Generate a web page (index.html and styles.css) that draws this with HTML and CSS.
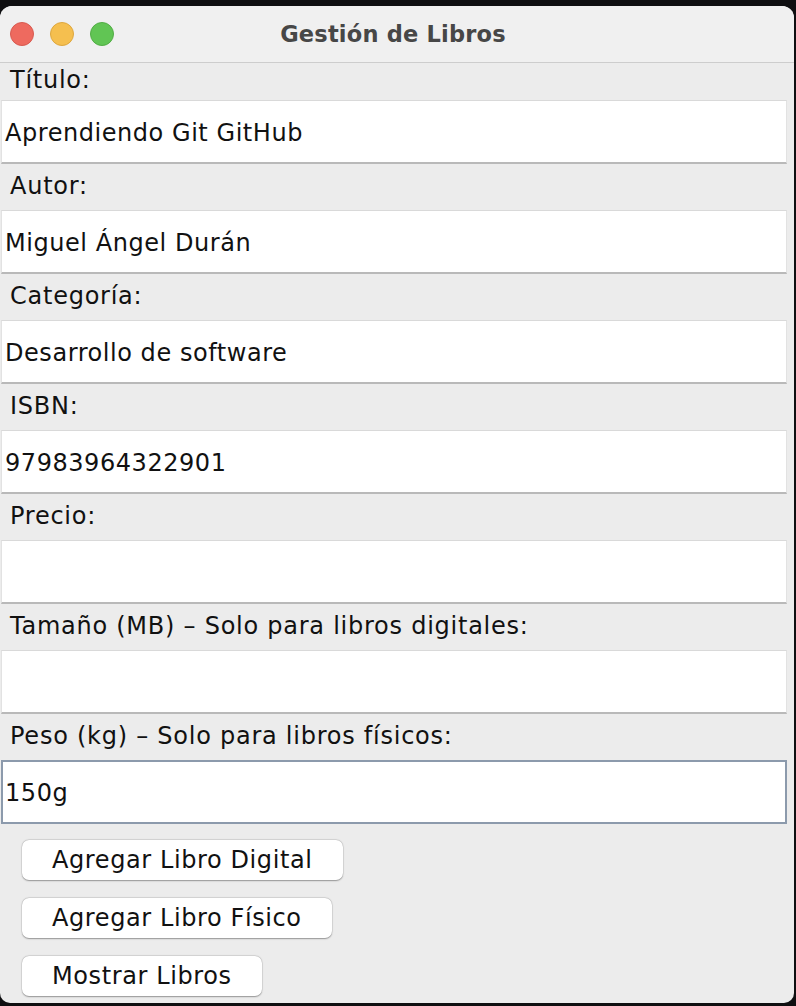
FILE: index.html
```html
<!DOCTYPE html>
<html lang="es">
<head>
<meta charset="utf-8">
<title>Gestión de Libros</title>
<link rel="stylesheet" href="styles.css">
</head>
<body>
<div class="window">
  <div class="titlebar">
    <div class="lights">
      <span class="light red"></span>
      <span class="light yellow"></span>
      <span class="light green"></span>
    </div>
    <div class="title">Gestión de Libros</div>
    <div class="spacer"></div>
  </div>
  <div class="content">
    <div class="label first">Título:</div>
    <div class="field">Aprendiendo Git GitHub</div>
    <div class="label">Autor:</div>
    <div class="field">Miguel Ángel Durán</div>
    <div class="label">Categoría:</div>
    <div class="field">Desarrollo de software</div>
    <div class="label">ISBN:</div>
    <div class="field">97983964322901</div>
    <div class="label">Precio:</div>
    <div class="field"></div>
    <div class="label">Tamaño (MB) – Solo para libros digitales:</div>
    <div class="field"></div>
    <div class="label">Peso (kg) – Solo para libros físicos:</div>
    <div class="field focused">150g</div>
    <div class="buttons">
      <button class="btn">Agregar Libro Digital</button>
      <button class="btn">Agregar Libro Físico</button>
      <button class="btn">Mostrar Libros</button>
    </div>
  </div>
</div>
</body>
</html>
```
FILE: styles.css
```css
html, body {
  margin: 0;
  padding: 0;
  background: #0f0f11;
}
body {
  width: 796px;
  height: 1006px;
  overflow: hidden;
  font-family: "DejaVu Sans", "Liberation Sans", sans-serif;
}
.window {
  margin-top: 6px;
  width: 794px;
  height: 997px;
  background: #ececec;
  border-radius: 12px 12px 10px 10px;
  overflow: hidden;
}
.titlebar {
  height: 56px;
  background: #f0f0f0;
  border-bottom: 1px solid #cdcdcd;
  display: grid;
  grid-template-columns: 1fr auto 1fr;
  align-items: center;
}
.lights {
  display: flex;
  gap: 16px;
  padding-left: 10px;
}
.light {
  width: 24px;
  height: 24px;
  border-radius: 50%;
  box-sizing: border-box;
}
.red { background: #ee6a5f; border: 1px solid #d85a50; }
.yellow { background: #f5bf4f; border: 1px solid #dea73e; }
.green { background: #61c554; border: 1px solid #52ad45; }
.title {
  font-family: "DejaVu Sans", "Liberation Sans", sans-serif;
  font-weight: bold;
  font-size: 22.5px;
  letter-spacing: 0.2px;
  color: #474747;
  padding-right: 8px;
}
.content {
  padding: 0 7px 0 1px;
}
.label {
  height: 46px;
  line-height: 44px;
  font-size: 24px;
  letter-spacing: 0.75px;
  color: #111;
  padding-left: 9px;
  white-space: nowrap;
}
.label.first {
  height: 37px;
  line-height: 35px;
}
.field {
  box-sizing: border-box;
  height: 64px;
  background: #fff;
  border-top: 1px solid #d9d9d9;
  border-left: 1px solid #e2e2e2;
  border-right: 1px solid #e2e2e2;
  border-bottom: 2px solid #b9b9b9;
  font-size: 24px;
  letter-spacing: 0.55px;
  color: #111;
  padding: 19px 0 0 3px;
  line-height: 26px;
  white-space: nowrap;
}
.field.focused {
  border: 2px solid #8c9aac;
  padding-left: 2px;
  padding-top: 18px;
}
.buttons {
  display: flex;
  flex-direction: column;
  align-items: flex-start;
  gap: 18px;
  padding: 16px 0 0 21px;
}
.btn {
  height: 40px;
  padding: 0 30px;
  background: #fff;
  border: none;
  border-radius: 7px;
  box-shadow: 0 0.5px 1.5px rgba(0,0,0,0.35), 0 0 0 0.5px rgba(0,0,0,0.08);
  font-family: "DejaVu Sans", "Liberation Sans", sans-serif;
  font-size: 24px;
  letter-spacing: 0.6px;
  color: #111;
  line-height: 40px;
}
```
